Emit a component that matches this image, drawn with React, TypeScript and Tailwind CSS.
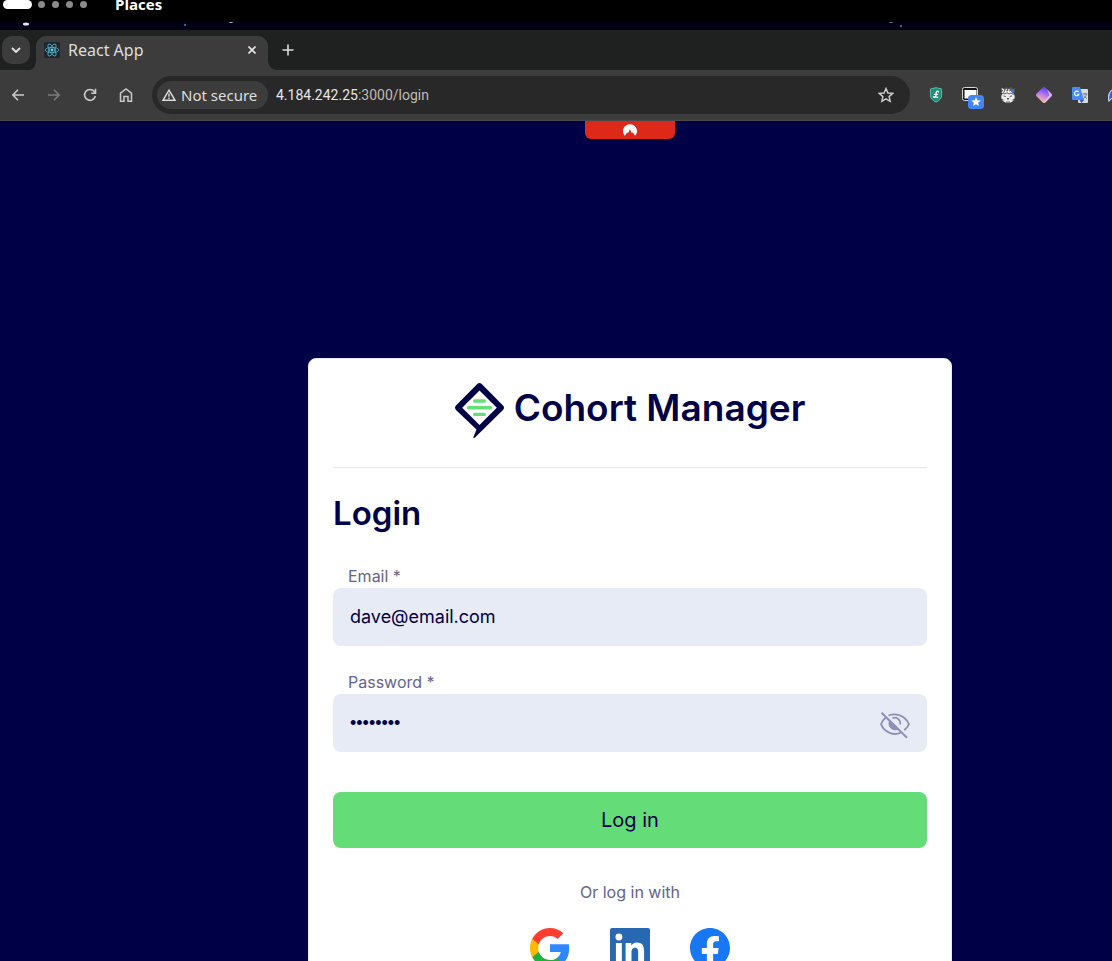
import { useState } from "react";

const workspaces = [0, 1, 2, 3];

function DesktopBar() {
  return (
    <div className="h-[22px] shrink-0 bg-black">
      <div className="flex h-[9px] items-center pl-[3px] text-white">
        <span className="h-[9px] w-[29px] rounded-full bg-white" />
        <span className="ml-1.5 flex gap-[7px]">
          {workspaces.map((n) => (
            <span key={n} className="size-[7px] rounded-full bg-[#8a8a8a]" />
          ))}
        </span>
        <span className="ml-7 font-['Open_Sans',sans-serif] text-[15px] leading-[9px] font-bold">Places</span>
      </div>
    </div>
  );
}

function Wallpaper() {
  return (
    <svg className="h-2 w-full shrink-0 bg-[#000014]" aria-hidden="true">
      <ellipse cx="26" cy="2" rx="3" ry="1.5" fill="#e8e8f4" />
      <circle cx="185" cy="3" r="1.2" fill="#4a5c94" />
      <ellipse cx="231" cy="0" rx="2" ry="1" fill="#c0c0d0" />
      <ellipse cx="891" cy="0" rx="2" ry="1" fill="#70809a" />
      <circle cx="901" cy="4" r="1.3" fill="#44587a" />
    </svg>
  );
}

function ReactMark() {
  return (
    <svg viewBox="0 0 16 16" className="size-4 shrink-0" aria-hidden="true">
      <rect width="16" height="16" rx="2" fill="#20262b" />
      <g fill="none" stroke="#55b8d0" strokeWidth="0.8">
        <ellipse cx="8" cy="8" rx="6.8" ry="2.6" />
        <ellipse cx="8" cy="8" rx="6.8" ry="2.6" transform="rotate(60 8 8)" />
        <ellipse cx="8" cy="8" rx="6.8" ry="2.6" transform="rotate(120 8 8)" />
      </g>
      <circle cx="8" cy="8" r="1.4" fill="#61dafb" />
    </svg>
  );
}

function TabStrip() {
  return (
    <div className="flex h-10 shrink-0 items-end bg-[#1f2120]">
      <button aria-label="Search tabs" className="mb-1.5 ml-0.5 grid size-7 place-items-center rounded-[10px] bg-[#3c3c3c]">
        <svg viewBox="0 0 10 6" className="h-1.5 w-2.5" fill="none" stroke="#e6e6e6" strokeWidth="1.8">
          <path d="M1 1l4 4 4-4" />
        </svg>
      </button>
      <svg viewBox="0 0 6 10" className="h-2.5 w-1.5 shrink-0" fill="#3c3c3c" aria-hidden="true">
        <path d="M6 0v10H0C4 9 6 5 6 0z" />
      </svg>
      <div className="flex h-[34px] w-[232px] items-center rounded-t-[10px] bg-[#3c3c3c] px-2 pb-1.5">
        <ReactMark />
        <span className="ml-2 flex-1 font-['Noto_Sans',sans-serif] text-base leading-5 text-[#dedede]">React App</span>
        <button aria-label="Close tab" className="grid size-4 place-items-center">
          <svg viewBox="0 0 8 8" className="size-2" fill="none" stroke="#e6e6e6" strokeWidth="1.6">
            <path d="M0.5 0.5l7 7M7.5 0.5l-7 7" />
          </svg>
        </button>
      </div>
      <svg viewBox="0 0 10 10" className="size-2.5 shrink-0" fill="#3c3c3c" aria-hidden="true">
        <path d="M0 0v10h10C4 10 0 6 0 0z" />
      </svg>
      <button aria-label="New tab" className="mb-2.5 grid size-5 place-items-center">
        <svg viewBox="0 0 12 12" className="size-3" fill="none" stroke="#dcdcdc" strokeWidth="1.6">
          <path d="M6 .5v11M.5 6h11" />
        </svg>
      </button>
    </div>
  );
}

function Extensions() {
  return (
    <div className="ml-3.5 flex w-[336px] shrink-0 items-center gap-3">
      <button aria-label="Shield" className="grid size-6 place-items-center">
        <svg viewBox="0 0 14 16" className="h-4 w-3.5">
          <path d="M7 0.7L12.600 2v6.500c0 3.200-2.200 4.800-5.600 6.600C3.600 13.300 1.400 11.700 1.400 8.500V2z" fill="#1f8f77" stroke="#59bfa5" strokeWidth="1" />
          <path d="M9.400 5.200c.3-1.500-1.900-1.700-2.200.2-.2 1.500.3 3-.7 4.500-.7 1-1.900.8-1.900.1 0-.9 1.900.7 4.300.2M5.300 7.300h3.300" fill="none" stroke="#fff" strokeWidth="1.200" strokeLinecap="round" />
        </svg>
      </button>
      <button aria-label="Bookmarked window" className="grid size-6 place-items-center">
        <svg viewBox="0 0 24 24" className="size-6 overflow-visible">
          <rect x="2.500" y="4.500" width="15" height="13" rx="2" fill="#151515" stroke="#d8d8d8" />
          <rect x="4.500" y="7" width="12" height="8.500" fill="#fff" />
          <rect x="8" y="12" width="16" height="14" rx="3.500" fill="#4285f4" />
          <path d="M16 14l1.300 3.300 3.500.2-2.700 2.200.9 3.400-3-1.900-3 1.900.9-3.400-2.700-2.200 3.500-.2z" fill="#fff" />
        </svg>
      </button>
      <button aria-label="Mascot" className="grid size-6 place-items-center">
        <svg viewBox="0 0 16 16" className="size-4">
          <path d="M1 1l3 .8L6.500 0 8 1.500 11 0l1.500 2 2.500-.5-.5 4.500-13 0L2 4z" fill="#5c5c5c" />
          <ellipse cx="8" cy="10" rx="6.800" ry="6" fill="#ececec" />
          <path d="M2 6l2-3M5 5.500L6.500 2M8.500 5.500L9 2M1.800 1.800L4 3M11 6l-.5-2" stroke="#fff" strokeWidth="1.100" />
          <path d="M1.500 7.500L3 6l2 1 2-1.300L9 7l2-1 2.500 1.500" fill="none" stroke="#4d4d4d" strokeWidth="0.900" />
          <path d="M3.500 8.800l2.300.8M12 8.800l-2.300.8M2 12l1.500 1M14 12l-1.500 1M6 15h4" fill="none" stroke="#4a4a4a" strokeWidth="0.900" />
          <ellipse cx="8" cy="11.800" rx="1" ry="0.800" fill="#1c1c1c" />
          <path d="M10.500 3.500L13.500 1.800v5L12.300 5.500z" fill="#2f7de0" />
        </svg>
      </button>
      <button aria-label="Gradient tools" className="grid size-6 place-items-center">
        <svg viewBox="0 0 16 16" className="size-4">
          <defs>
            <linearGradient id="gem" x1="0.800" y1="0" x2="0.400" y2="1">
              <stop offset="0.200" stopColor="#7048f8" />
              <stop offset="0.600" stopColor="#c583e4" />
              <stop offset="1" stopColor="#ffc28c" />
            </linearGradient>
          </defs>
          <path d="M6.500 .8q1.500-1.500 3 0l5.700 5.700q1.500 1.500 0 3l-5.700 5.700q-1.500 1.500-3 0L.8 9.500q-1.500-1.500 0-3z" fill="url(#gem)" />
          <path d="M11 2.300l4.200 4.200q1.500 1.500 0 3l-5.700 5.700q-1 1-2 .5L12.500 9.500q1-1 .5-2.500z" fill="#e5c8f8" opacity="0.850" />
        </svg>
      </button>
      <button aria-label="Translate" className="grid size-6 place-items-center">
        <svg viewBox="0 0 16 16" className="size-4">
          <rect x="6" y="2" width="10" height="14" rx="1" fill="#d9dcde" />
          <path d="M0 1q0-1 1-1h7l4 13H1q-1 0-1-1z" fill="#4a8af4" />
          <path d="M7.500 13H12l-2.500 3z" fill="#2a56c6" />
          <path d="M6.600 5A2.300 2.300 0 1 0 7 7.200H5" fill="none" stroke="#fff" strokeWidth="1.100" />
          <path d="M10.500 7h5M13 5.800V7M14.500 7c-.3 2-1.500 3.500-3 4.500M12 8.500c.7 1.500 1.700 2.500 3 3" fill="none" stroke="#5b7480" strokeWidth="0.900" />
        </svg>
      </button>
      <button aria-label="Blue orb" className="grid size-6 place-items-center">
        <svg viewBox="0 0 16 16" className="size-4">
          <path d="M1 14C-1 6 4 1 10 1s6 6 5 12C11 9 5 9 1 14z" fill="#3557f5" stroke="#c8d2ff" strokeWidth="1.200" />
        </svg>
      </button>
    </div>
  );
}

function Toolbar() {
  const [address, setAddress] = useState(":3000/login");
  return (
    <div className="flex h-[51px] shrink-0 items-center border-b border-[#4a4a4a] bg-[#3c3c3c]">
      <div className="flex gap-3 pl-1.5">
        <button aria-label="Back" className="grid size-6 place-items-center">
          <svg viewBox="0 0 12 12" className="size-3" fill="none" stroke="#c9c9c9" strokeWidth="1.600">
            <path d="M12 6H1M6 .8L.9 6 6 11.200" />
          </svg>
        </button>
        <button aria-label="Forward" className="grid size-6 place-items-center">
          <svg viewBox="0 0 12 12" className="size-3" fill="none" stroke="#7c7c7c" strokeWidth="1.600">
            <path d="M0 6h11M6 .8L11.100 6 6 11.200" />
          </svg>
        </button>
        <button aria-label="Reload" className="grid size-6 place-items-center">
          <svg viewBox="0 0 14 14" className="size-3.5" fill="none" stroke="#c9c9c9" strokeWidth="1.600">
            <path d="M12.300 8A5.400 5.400 0 1 1 11.200 3.500L12.500 5M12.500 .8V5.200H8.200" />
          </svg>
        </button>
        <button aria-label="Home" className="grid size-6 place-items-center">
          <svg viewBox="0 0 14 14" className="size-3.5" fill="none" stroke="#c9c9c9" strokeWidth="1.500">
            <path d="M1.500 5.200L7 1l5.500 4.200v8H9V8.500H5v4.700H1.500z" />
          </svg>
        </button>
      </div>
      <div className="ml-3.5 flex h-[38px] flex-1 items-center rounded-full bg-[#282828] pr-3 pl-[5px]">
        <button className="flex h-7 w-[111px] items-center gap-[5px] rounded-full bg-[#3c3c3c] pl-[5px] font-['Noto_Sans',sans-serif] text-[15px] whitespace-nowrap text-[#dedede]">
          <svg viewBox="0 0 14 12" className="h-3 w-3.5 shrink-0" fill="none" stroke="#dcdcdc" strokeWidth="1.400">
            <path d="M7 1.200L13 11.300H1zM7 4.500v3.300M7 8.600v1.400" />
          </svg>
          Not secure
        </button>
        <label className="ml-2 flex flex-1 items-center font-[Roboto,sans-serif] text-sm text-[#e6e6e6]">
          4.184.242.25
          <input
            aria-label="Address"
            value={address}
            onChange={(e) => setAddress(e.target.value)}
            className="min-w-0 flex-1 bg-transparent text-[#bcbcbc] outline-none"
          />
        </label>
        <button aria-label="Bookmark this page" className="grid size-6 place-items-center">
          <svg viewBox="0 0 16 16" className="size-4" fill="none" stroke="#d0d0d0" strokeWidth="1.400">
            <path d="M8 1.500l1.900 4.500 4.900.4-3.700 3.200 1.100 4.700L8 11.800l-4.200 2.500 1.100-4.700L1.200 6.400l4.900-.4z" />
          </svg>
        </button>
      </div>
      <Extensions />
    </div>
  );
}

function Logo() {
  return (
    <div className="flex items-start justify-center">
      <svg viewBox="0 0 49 56" className="h-14 w-[49px] shrink-0" aria-hidden="true">
        <path
          d="M22.300 1Q24.500-.8 26.700 1L48 22.500Q50 24.700 48 26.900L20 54.500Q18.300 56 18.500 54L21.500 46.500 1 26.900Q-1 24.700 1 22.500z"
          fill="#000046"
        />
        <path d="M24.500 7.500L41.800 24.700 24.500 42 7.200 24.700z" fill="#fff" />
        <path d="M19.700 18h9.600M13.500 24.700h22M19.700 31.400h9.600" stroke="#63de79" strokeWidth="3.400" strokeLinecap="round" />
      </svg>
      <span className="ml-2.5 text-[37px] leading-[50px] font-semibold">Cohort Manager</span>
    </div>
  );
}

function EyeOff() {
  return (
    <svg viewBox="0 0 30 28" className="h-7 w-[30px]" fill="none" stroke="#8f8fb8" strokeWidth="1.800">
      <path d="M8.500 4.500C14 2 24.500 3 29 13.200c-1 2.300-2.500 4.200-4.800 6M5.800 6.500C3.500 8.300 2 10.500 1 13.200c3.500 8.500 13 12 20 8.300" />
      <path d="M12.500 7.200c4-1.700 8.300 1.300 7.700 6.300" />
      <path d="M9.500 9.500l9 8.500C14.500 20.500 7 17.500 9.500 9.500z" fill="#8f8fb8" strokeWidth="1" />
      <path d="M1.500 1.800l25.500 25" strokeWidth="2" />
    </svg>
  );
}

function LoginCard() {
  const [email, setEmail] = useState("dave@email.com");
  const [password, setPassword] = useState("password");
  const [visible, setVisible] = useState(false);
  return (
    <section className="w-[644px] rounded-lg border border-[#e6ebf5] bg-white p-6 font-[Inter,sans-serif] text-[#000046]">
      <Logo />
      <hr className="mt-7 border-[#e6e8f0]" />
      <h1 className="mt-6 text-[33px] leading-[42px] font-semibold">Login</h1>
      <form onSubmit={(e) => e.preventDefault()}>
        <label htmlFor="email" className="mt-8 block px-[15px] pb-0.5 text-base leading-5 text-[#64648c]">
          Email *
        </label>
        <input
          id="email"
          type="email"
          value={email}
          onChange={(e) => setEmail(e.target.value)}
          className="block h-[58px] w-full rounded-lg bg-[#e6ebf5] px-[17px] pb-0.5 text-[18px] outline-none"
        />
        <label htmlFor="password" className="mt-[26px] block px-[15px] pb-0.5 text-base leading-5 text-[#64648c]">
          Password *
        </label>
        <div className="flex h-[58px] items-center rounded-lg bg-[#e6ebf5] px-[17px]">
          <input
            id="password"
            type={visible ? "text" : "password"}
            value={password}
            onChange={(e) => setPassword(e.target.value)}
            className={
              visible
                ? "min-w-0 flex-1 bg-transparent text-[18px] outline-none"
                : "min-w-0 flex-1 bg-transparent font-['Liberation_Sans',sans-serif] text-[18px] outline-none"
            }
          />
          <button type="button" aria-label="Show password" className="pt-1" onClick={() => setVisible(!visible)}>
            <EyeOff />
          </button>
        </div>
        <button type="submit" className="mt-10 block h-14 w-full rounded-lg bg-[#64dc78] text-xl">
          Log in
        </button>
      </form>
      <p className="mt-8 text-center text-base text-[#64648c]">Or log in with</p>
      <div className="mt-6 flex justify-center gap-10">
        <a href="#google" aria-label="Google">
          <svg viewBox="1 1 22 22" className="size-10">
            <path fill="#3086ff" d="M22.560 12.250c0-.78-.07-1.530-.2-2.250H12v4.260h5.920c-.26 1.370-1.040 2.530-2.210 3.310v2.770h3.570c2.080-1.920 3.280-4.740 3.280-8.090z" />
            <path fill="#20b038" d="M12 23c2.970 0 5.460-.98 7.280-2.660l-3.570-2.770c-.98.66-2.230 1.060-3.710 1.060-2.860 0-5.290-1.930-6.160-4.530H2.180v2.840C3.990 20.530 7.700 23 12 23z" />
            <path fill="#ffba00" d="M5.840 14.090c-.22-.66-.35-1.360-.35-2.090s.13-1.430.35-2.090V7.070H2.180C1.430 8.550 1 10.220 1 12s.43 3.450 1.180 4.930l2.850-2.220.81-.62z" />
            <path fill="#ff3e30" d="M12 5.380c1.620 0 3.060.56 4.210 1.640l3.150-3.150C17.450 2.090 14.970 1 12 1 7.700 1 3.990 3.470 2.180 7.070l3.660 2.840c.87-2.600 3.300-4.530 6.160-4.530z" />
          </svg>
        </a>
        <a href="#linkedin" aria-label="LinkedIn">
          <svg viewBox="0 0 24 24" className="size-10">
            <rect width="24" height="24" rx="1.200" fill="#2867b2" />
            <path fill="#fff" d="M20.447 20.452h-3.554v-5.569c0-1.328-.027-3.037-1.852-3.037-1.853 0-2.136 1.445-2.136 2.939v5.667H9.351V9h3.414v1.561h.046c.477-.9 1.637-1.850 3.370-1.850 3.601 0 4.267 2.370 4.267 5.455v6.286zM5.337 7.433a2.062 2.062 0 0 1-2.063-2.065 2.064 2.064 0 1 1 2.063 2.065zm1.782 13.019H3.555V9h3.564v11.452z" />
          </svg>
        </a>
        <a href="#facebook" aria-label="Facebook">
          <svg viewBox="0 0 24 24" className="size-10">
            <path fill="#1877f2" d="M24 12.073c0-6.627-5.373-12-12-12s-12 5.373-12 12c0 5.990 4.388 10.954 10.125 11.854v-8.385H7.078v-3.470h3.047V9.430c0-3.007 1.792-4.669 4.533-4.669 1.312 0 2.686.235 2.686.235v2.953H15.830c-1.491 0-1.956.925-1.956 1.874v2.250h3.328l-.532 3.470h-2.796v8.385C19.612 23.027 24 18.062 24 12.073z" />
          </svg>
        </a>
      </div>
    </section>
  );
}

export default function App() {
  return (
    <div className="h-screen overflow-hidden bg-[#000046]">
      <div className="flex h-full min-w-[1260px] flex-col">
        <DesktopBar />
        <Wallpaper />
        <TabStrip />
        <Toolbar />
        <main className="flex min-h-0 flex-1 flex-col items-center overflow-hidden">
          <button aria-label="Open VPN panel" className="flex h-[18px] w-[90px] shrink-0 items-center justify-center rounded-b-md bg-[#de2918]">
            <svg viewBox="0 0 14 12" className="h-3 w-3.5" fill="#fff">
              <path d="M2 11.800C.7 10.400 0 9 0 7.200 0 3.300 3 .2 7 .2s7 3.100 7 7c0 1.800-.7 3.200-2 4.600L9.800 8.200l-.9 1L7 5.200 5 9.200 4.200 8.200z" />
            </svg>
          </button>
          <div className="mt-[219px]">
            <LoginCard />
          </div>
        </main>
      </div>
    </div>
  );
}
